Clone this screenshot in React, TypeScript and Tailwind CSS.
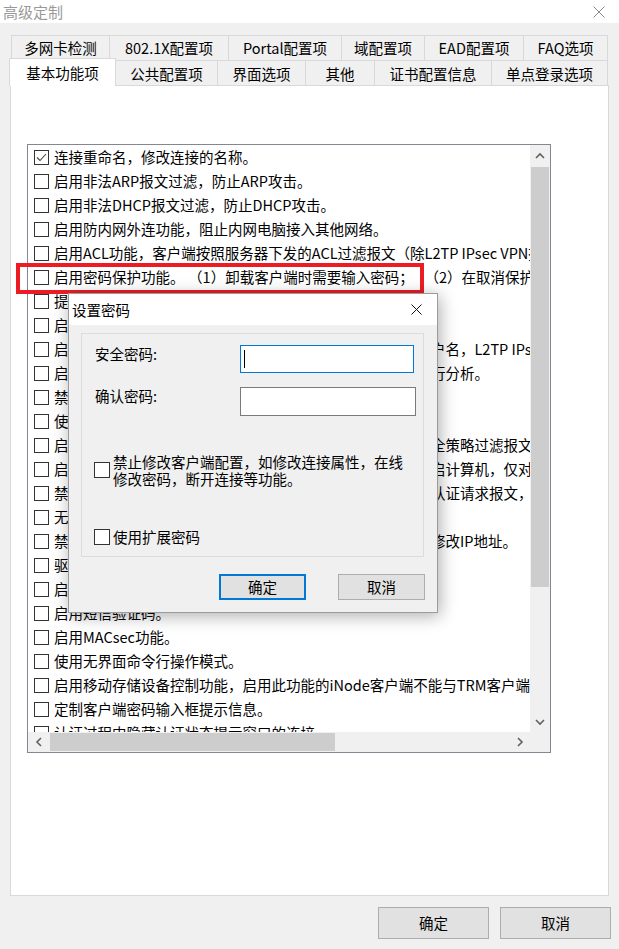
import React from 'react';

type Tab = { label: string; w: string };

const topTabs: Tab[] = [
  { label: '多网卡检测', w: 'w-[99px]' },
  { label: '802.1X配置项', w: 'w-[119px]' },
  { label: 'Portal配置项', w: 'w-[113px]' },
  { label: '域配置项', w: 'w-[83px]' },
  { label: 'EAD配置项', w: 'w-[99px]' },
  { label: 'FAQ选项', w: 'w-[84px]' },
];

const bottomTabs: Tab[] = [
  { label: '公共配置项', w: 'w-[102px]' },
  { label: '界面选项', w: 'w-[88px]' },
  { label: '其他', w: 'w-[69px]' },
  { label: '证书配置信息', w: 'w-[117px]' },
  { label: '单点登录选项', w: 'w-[116px]' },
];

const rows: { text: string; checked?: boolean }[] = [
  { text: '连接重命名，修改连接的名称。', checked: true },
  { text: '启用非法ARP报文过滤，防止ARP攻击。' },
  { text: '启用非法DHCP报文过滤，防止DHCP攻击。' },
  { text: '启用防内网外连功能，阻止内网电脑接入其他网络。' },
  { text: '启用ACL功能，客户端按照服务器下发的ACL过滤报文（除L2TP IPsec VPN报文）。' },
  { text: '启用密码保护功能。\u2005（1）卸载客户端时需要输入密码；\u2002\u2005（2）在取消保护功能时需要输入密码。' },
  { text: '提示用户修改密码。' },
  { text: '启用客户端自动升级功能。' },
  { text: '启用记住用户名功能，客户端启动后自动填写登录使用的用户名，L2TP IPsec VPN连接也会保存。' },
  { text: '启用日志收集功能，将客户端运行日志上传到管理服务器进行分析。' },
  { text: '禁止用户修改连接属性。' },
  { text: '使用系统代理设置。' },
  { text: '启用报文过滤功能，客户端将严格根据服务器统一下发的安全策略过滤报文。' },
  { text: '启用开机认证功能，认证前禁止登录系统，认证成功后需重启计算机，仅对Windows系统有效。' },
  { text: '禁止客户端在认证成功前向网络发送其他报文，仅允许发送认证请求报文，保证网络安全。' },
  { text: '无线网络自动连接。' },
  { text: '禁止用户在客户端认证成功之后通过本地网络连接属性手动修改IP地址。' },
  { text: '驱动程序自动安装。' },
  { text: '启用单点登录功能。' },
  { text: '启用短信验证码。' },
  { text: '启用MACsec功能。' },
  { text: '使用无界面命令行操作模式。' },
  { text: '启用移动存储设备控制功能，启用此功能的iNode客户端不能与TRM客户端同时使用。' },
  { text: '定制客户端密码输入框提示信息。' },
  { text: '认证过程中隐藏认证状态提示窗口的连接。' },
];

const CheckBox = ({ checked, size = 'w-[15px] h-[15px]' }: { checked?: boolean; size?: string }) => (
  <span className={`${size} shrink-0 border border-[#333333] bg-white flex items-center justify-center`}>
    {checked && (
      <svg width="13" height="13" viewBox="0 0 13 13">
        <path d="M2 6.5 L5 9.5 L11 3" fill="none" stroke="#444" strokeWidth="1.1" />
      </svg>
    )}
  </span>
);

const Chevron = ({ dir }: { dir: 'up' | 'down' | 'left' | 'right' }) => {
  const d = {
    up: 'M1 6 L5 2 L9 6',
    down: 'M1 2 L5 6 L9 2',
    left: 'M6 1 L2 5 L6 9',
    right: 'M2 1 L6 5 L2 9',
  }[dir];
  const horiz = dir === 'up' || dir === 'down';
  return (
    <svg width={horiz ? 10 : 8} height={horiz ? 8 : 10} viewBox={horiz ? '0 0 10 8' : '0 0 8 10'}>
      <path d={d} fill="none" stroke="#606060" strokeWidth="1.6" />
    </svg>
  );
};

const CloseIcon = ({ color, size }: { color: string; size: number }) => (
  <svg width={size} height={size} viewBox={`0 0 ${size} ${size}`}>
    <path d={`M0.5 0.5 L${size - 0.5} ${size - 0.5} M${size - 0.5} 0.5 L0.5 ${size - 0.5}`} stroke={color} strokeWidth="1" />
  </svg>
);

export default function App() {
  return (
    <div className="relative w-[619px] h-[949px] overflow-hidden bg-[#f0f0f0] text-black text-[14.5px] [text-spacing-trim:space-all] font-[family-name:'Noto_Sans_CJK_SC',sans-serif]">
      {/* title bar */}
      <div className="h-[23px] bg-white flex items-center justify-between pl-[3px] pr-[14px]">
        <span className="text-[15px] leading-[20px] text-[#999999]">高级定制</span>
        <CloseIcon color="#8a8a8a" size={12} />
      </div>

      {/* tabs */}
      <div className="flex ml-[11px] mt-[12px] h-[25px]">
        {topTabs.map((t, i) => (
          <div
            key={t.label}
            className={`${t.w} h-[25px] flex items-center justify-center leading-[20px] border-t border-r border-[#d9d9d9] ${i === 0 ? 'border-l' : ''}`}
          >
            {t.label}
          </div>
        ))}
      </div>
      <div className="flex ml-[9px] h-[25px] items-start">
        <div className="relative z-10 w-[107px] h-[28px] -mt-[2px] bg-white border-l border-t border-r border-[#d9d9d9] flex items-center justify-center leading-[20px]">
          基本功能项
        </div>
        {bottomTabs.map((t) => (
          <div
            key={t.label}
            className={`${t.w} h-[25px] pt-px flex items-center justify-center leading-[20px] border-t border-r border-[#d9d9d9]`}
          >
            {t.label}
          </div>
        ))}
      </div>

      {/* panel */}
      <div className="ml-[10px] w-[599px] h-[811px] bg-white border border-[#d9d9d9] pt-[58px] pl-[16px]">
        <div className="w-[524px] h-[609px] border border-[#828790] grid grid-cols-[502px_20px] grid-rows-[587px_20px]">
          <div className="overflow-hidden pl-[6px]">
            {rows.map((r, i) => (
              <div key={i} className="h-[24px] flex items-center gap-[5px] whitespace-nowrap">
                <CheckBox checked={r.checked} />
                <span className="leading-[24px]">{r.text}</span>
              </div>
            ))}
          </div>
          {/* vertical scrollbar */}
          <div className="bg-[#f0f0f0] flex flex-col">
            <div className="h-[21px] flex items-center justify-center">
              <Chevron dir="up" />
            </div>
            <div className="mt-px h-[420px] mx-px bg-[#cdcdcd]" />
            <div className="flex-1" />
            <div className="h-[21px] flex items-center justify-center">
              <Chevron dir="down" />
            </div>
          </div>
          {/* horizontal scrollbar */}
          <div className="bg-[#f0f0f0] flex items-stretch">
            <div className="w-[21px] flex items-center justify-center">
              <Chevron dir="left" />
            </div>
            <div className="ml-px w-[285px] my-px bg-[#cdcdcd]" />
            <div className="flex-1" />
            <div className="w-[21px] flex items-center justify-center">
              <Chevron dir="right" />
            </div>
          </div>
          <div className="bg-[#f0f0f0]" />
        </div>
      </div>

      {/* bottom buttons */}
      <div className="mt-[11px] flex justify-end gap-[11px] pr-[8px]">
        <button className="w-[111px] h-[32px] border border-[#adadad] bg-[#e1e1e1] leading-[20px]">确定</button>
        <button className="w-[111px] h-[32px] border border-[#adadad] bg-[#e1e1e1] leading-[20px]">取消</button>
      </div>

      {/* red highlight annotation */}
      <div className="absolute left-[16px] top-[263px] w-[408px] h-[31px] border-[4px] border-[#ed1c24] z-20" />

      {/* 设置密码 dialog */}
      <div className="absolute left-[68px] top-[293px] w-[370px] h-[320px] z-30 flex flex-col border border-[#9b9b9b] bg-[#f0f0f0] shadow-[2px_3px_16px_rgba(0,0,0,0.32)]">
        <div className="h-[31px] shrink-0 bg-white flex items-center justify-between pl-[3px] pr-[15px]">
          <span className="leading-[20px]">设置密码</span>
          <CloseIcon color="#111111" size={11} />
        </div>
        <div className="flex-1 px-[12px] pt-[8px]">
          <div className="w-[343px] h-[224px] border border-[#dcdcdc] pl-[13px] pt-[11px]">
            <div className="flex items-start">
              <span className="w-[145px] leading-[18px]">安全密码:</span>
              <div className="w-[174px] h-[28px] border border-[#0078d7] bg-white flex items-center pl-[3px]">
                <span className="w-px h-[18px] bg-black" />
              </div>
            </div>
            <div className="flex items-start mt-[14px]">
              <span className="w-[145px] leading-[18px]">确认密码:</span>
              <div className="w-[176px] h-[29px] border border-[#7a7a7a] bg-white" />
            </div>
            <div className="flex items-center gap-[3px] -ml-px mt-[37px]">
              <CheckBox size="w-[16px] h-[16px]" />
              <span className="leading-[17px]">
                禁止修改客户端配置，如修改连接属性，在线
                <br />
                修改密码，断开连接等功能。
              </span>
            </div>
            <div className="flex items-center gap-[3px] -ml-px mt-[41px]">
              <CheckBox size="w-[16px] h-[16px]" />
              <span className="leading-[17px]">使用扩展密码</span>
            </div>
          </div>
          <div className="mt-[17px] flex justify-end items-start gap-[32px]">
            <button className="w-[87px] h-[26px] border-2 border-[#0078d7] bg-[#e1e1e1] leading-[18px]">确定</button>
            <button className="w-[87px] h-[26px] border border-[#adadad] bg-[#e1e1e1] leading-[18px]">取消</button>
          </div>
        </div>
      </div>
    </div>
  );
}
